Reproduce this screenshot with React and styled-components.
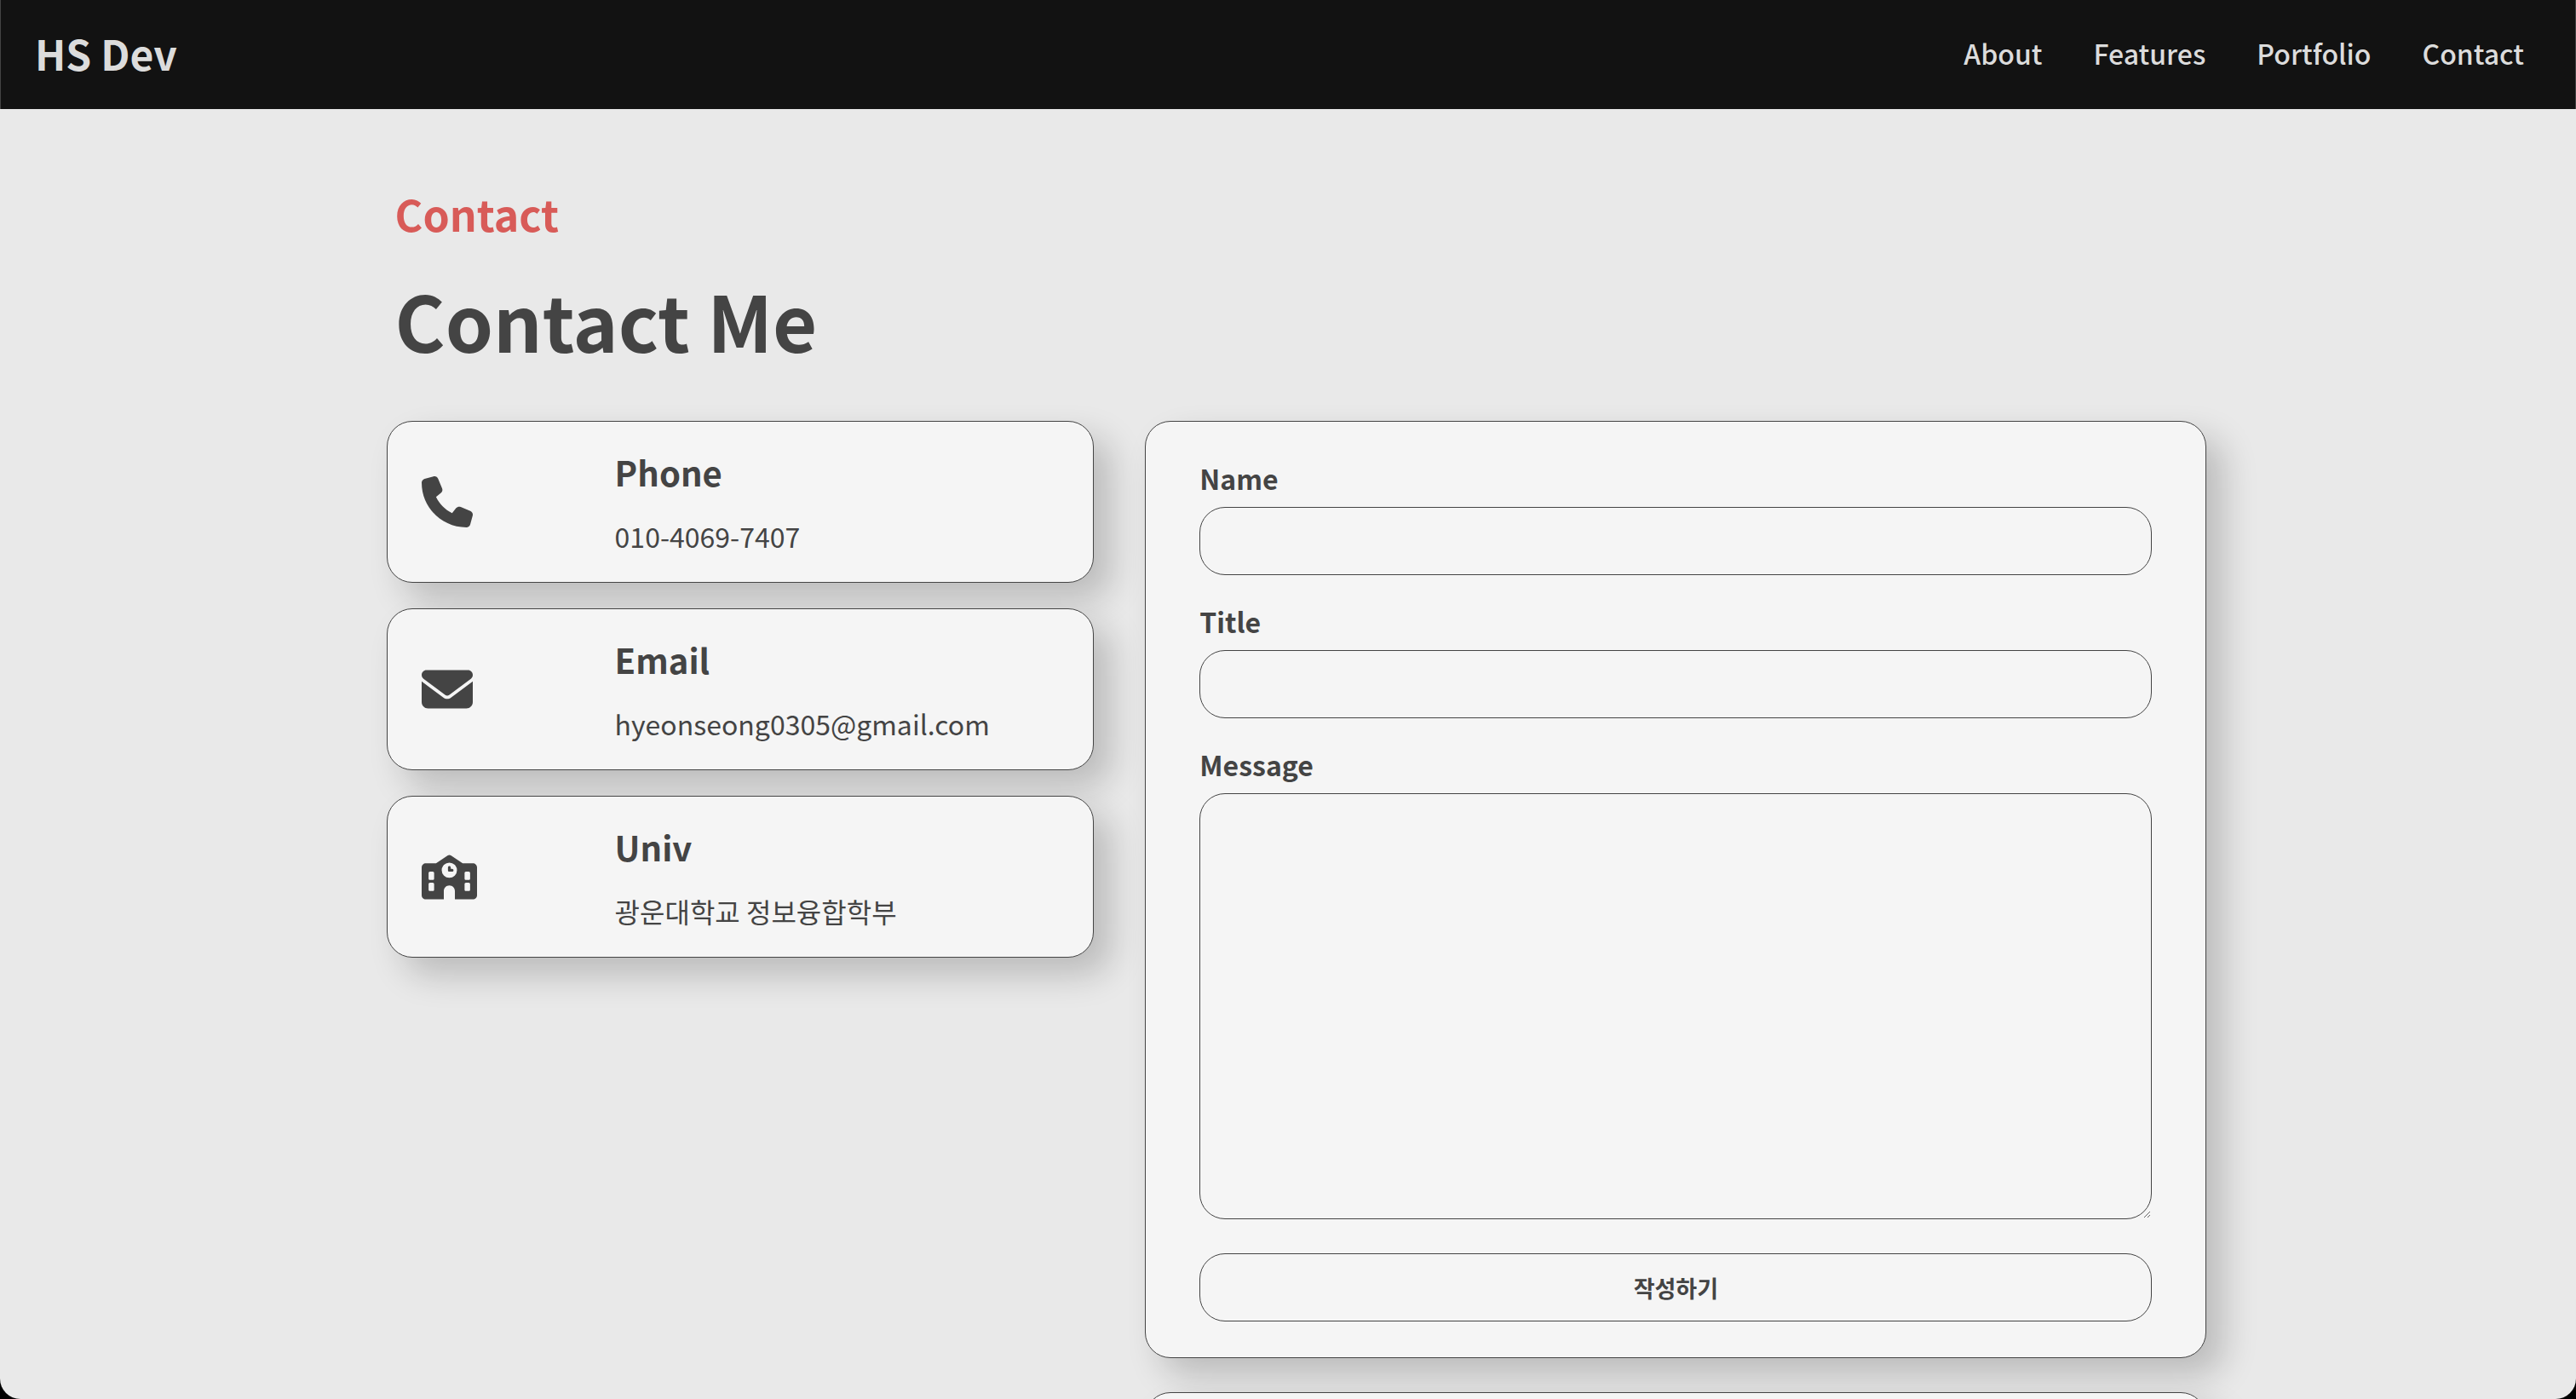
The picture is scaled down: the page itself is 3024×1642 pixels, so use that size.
import React from "react";
import styled, { createGlobalStyle } from "styled-components";
import { FaPhone, FaEnvelope, FaSchool } from "react-icons/fa6";

const GlobalStyle = createGlobalStyle`
  *, *::before, *::after { box-sizing: border-box; }
  body {
    margin: 0;
    background: #000;
    color: #444;
    font-family: "Noto Sans CJK KR", "Noto Sans", sans-serif;
  }
  h1, h2, h3, p, ul { margin: 0; padding: 0; }
`;

const Page = styled.div`
  height: 100vh;
  overflow-y: auto;
  scrollbar-width: none;
  background: #e9e9e9;
  border-radius: 0 0 24px 24px;
`;

const Header = styled.header`
  display: flex;
  align-items: center;
  justify-content: space-between;
  height: 128px;
  padding: 0 60px 4px 40px;
  background: #121212;
  border: solid #444;
  border-width: 0 1px;
`;

const Logo = styled.a`
  color: #dcdcdc;
  font-size: 48px;
  font-weight: 700;
  line-height: 72px;
  text-decoration: none;
`;

const NavList = styled.ul`
  display: flex;
  gap: 60px;
  list-style: none;
`;

const NavLink = styled.a`
  color: #dcdcdc;
  font-size: 32px;
  font-weight: 500;
  line-height: 48px;
  text-decoration: none;
`;

const Section = styled.main`
  padding: 86px calc(15% - 20px) 80px 15%;
`;

const Heading = styled.div`
  padding: 0 10px;
  margin-bottom: 54px;
`;

const Eyebrow = styled.h2`
  color: #d85b58;
  font-size: 50px;
  font-weight: 700;
  line-height: 72px;
`;

const Title = styled.h1`
  margin-top: 24px;
  font-size: 90px;
  font-weight: 700;
  line-height: 130px;
`;

const Columns = styled.div`
  display: grid;
  grid-template-columns: 2fr 3fr;
  gap: 60px;
  align-items: start;
`;

const Stack = styled.div`
  display: grid;
  gap: ${({ $gap }) => $gap}px;
`;

const Card = styled.section`
  background: #f5f5f5;
  border: 1px solid #444;
  border-radius: 30px;
  box-shadow: 20px 20px 40px rgba(0, 0, 0, 0.2);
`;

const InfoCard = styled(Card)`
  display: grid;
  grid-template-columns: 3fr 7fr;
  align-items: center;
  height: 190px;
  padding: 0 32px 0 40px;
`;

const InfoIcon = styled.span`
  display: flex;
  svg {
    width: ${({ $width }) => $width}px;
    height: auto;
  }
`;

const InfoTitle = styled.h3`
  font-size: 40px;
  font-weight: 700;
  line-height: 58px;
`;

const InfoText = styled.p`
  margin-top: 22px;
  font-size: 32px;
  line-height: 48px;
`;

const FormCard = styled(Card)`
  padding: 42px 63px;
`;

const Form = styled.form`
  display: flex;
  flex-direction: column;
`;

const Label = styled.label`
  margin-bottom: 10px;
  font-size: 32px;
  font-weight: 700;
  line-height: 48px;
`;

const fieldStyle = `
  width: 100%;
  padding: 0 30px;
  color: #444;
  background: transparent;
  border: 1px solid #444;
  border-radius: 30px;
  font-family: inherit;
`;

const Input = styled.input`
  ${fieldStyle}
  height: 80px;
  margin-bottom: 30px;
  font-size: 32px;
`;

const TextArea = styled.textarea`
  ${fieldStyle}
  height: 500px;
  margin-bottom: 40px;
  padding: 30px;
  font-size: 32px;
  resize: vertical;
`;

const SubmitButton = styled.button`
  ${fieldStyle}
  height: 80px;
  font-size: 27px;
  font-weight: 700;
  cursor: pointer;
`;

const CommentCard = styled(Card)`
  height: 200px;
`;

const NAV = ["About", "Features", "Portfolio", "Contact"];

const INFO = [
  { title: "Phone", text: "010-4069-7407", Icon: FaPhone, width: 60 },
  { title: "Email", text: "hyeonseong0305@gmail.com", Icon: FaEnvelope, width: 60 },
  { title: "Univ", text: "광운대학교 정보융합학부", Icon: FaSchool, width: 65 },
];

export default function App() {
  return (
    <>
      <GlobalStyle />
      <Page>
        <Header>
          <Logo href="#top">HS Dev</Logo>
          <nav>
            <NavList>
              {NAV.map((name) => (
                <li key={name}>
                  <NavLink href={`#${name.toLowerCase()}`}>{name}</NavLink>
                </li>
              ))}
            </NavList>
          </nav>
        </Header>
        <Section id="contact">
          <Heading>
            <Eyebrow>Contact</Eyebrow>
            <Title>Contact Me</Title>
          </Heading>
          <Columns>
            <Stack $gap={30}>
              {INFO.map(({ title, text, Icon, width }) => (
                <InfoCard key={title}>
                  <InfoIcon $width={width}>
                    <Icon aria-hidden="true" />
                  </InfoIcon>
                  <div>
                    <InfoTitle>{title}</InfoTitle>
                    <InfoText>{text}</InfoText>
                  </div>
                </InfoCard>
              ))}
            </Stack>
            <Stack $gap={40}>
              <FormCard>
                <Form onSubmit={(event) => event.preventDefault()}>
                  <Label htmlFor="name">Name</Label>
                  <Input id="name" type="text" />
                  <Label htmlFor="title">Title</Label>
                  <Input id="title" type="text" />
                  <Label htmlFor="message">Message</Label>
                  <TextArea id="message" />
                  <SubmitButton type="submit">작성하기</SubmitButton>
                </Form>
              </FormCard>
              <CommentCard />
            </Stack>
          </Columns>
        </Section>
      </Page>
    </>
  );
}
